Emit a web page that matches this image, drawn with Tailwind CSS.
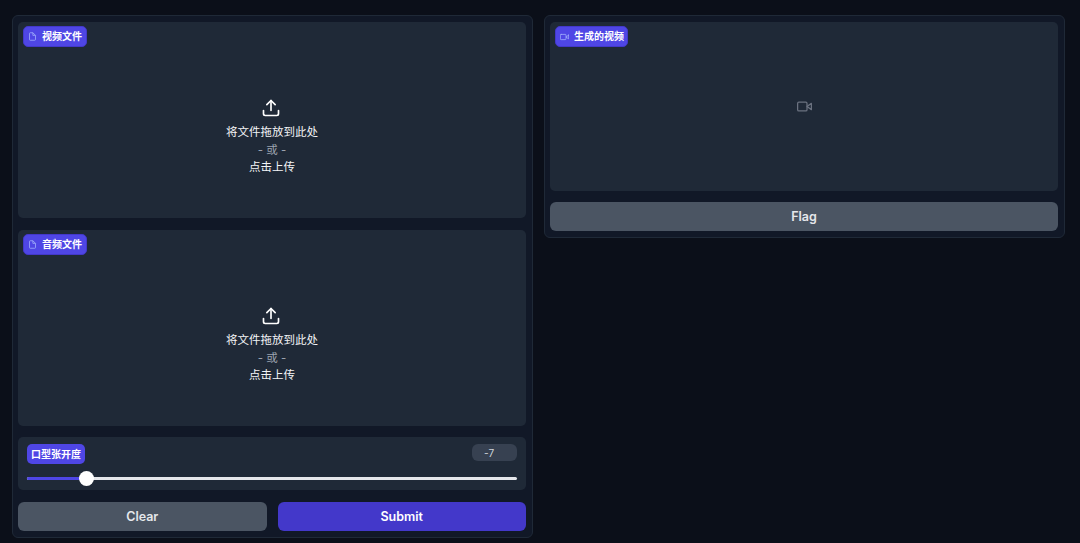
<!DOCTYPE html>
<html lang="zh">
<head>
  <meta charset="UTF-8">
  <title>Demo</title>
  <script src="https://cdn.jsdelivr.net/npm/@tailwindcss/browser@4"></script>
</head>
<body class="bg-[#0b0f19] h-[543px] overflow-hidden font-['Inter','Noto_Sans_CJK_SC',sans-serif] text-[#f3f4f6]">
  <div class="flex items-start gap-[11px] pl-3 pt-[15px]">

    <!-- left column -->
    <div class="w-[521px] h-[523px] flex flex-col bg-[#111827] border border-[#1f2937] rounded-md pl-[5px] pr-[6px] pt-[6px]">
      <div class="relative h-[196px] bg-[#1f2937] rounded-[5px] flex flex-col items-center pt-[76px]">
        <div class="absolute left-[5px] top-[4px] h-[21px] flex items-center gap-[5px] pl-[4px] pr-[4px] bg-[#4f46e5] border border-[#4338ca] rounded-[5px] text-[10px] font-semibold text-white">
          <svg class="w-[9px] h-[11px] text-[#a5b4fc]" viewBox="0 0 24 24" fill="none" stroke="currentColor" stroke-width="2"><path d="M13 2H6a2 2 0 0 0-2 2v16a2 2 0 0 0 2 2h12a2 2 0 0 0 2-2V9z"/><path d="M13 2v7h7"/></svg>
          视频文件
        </div>
        <svg class="w-[20px] h-[20px] text-white -translate-x-px" viewBox="0 0 24 24" fill="none" stroke="currentColor" stroke-width="2" stroke-linecap="round" stroke-linejoin="round"><path d="M21 15v4a2 2 0 0 1-2 2H5a2 2 0 0 1-2-2v-4"/><path d="M17 8l-5-5-5 5"/><path d="M12 3v12"/></svg>
        <div class="mt-[6px] text-[11.5px] leading-[17.5px] text-center">
          <div>将文件拖放到此处</div>
          <div class="text-[#9ca3af]">- 或 -</div>
          <div>点击上传</div>
        </div>
      </div>

      <div class="relative h-[196px] mt-[12px] bg-[#1f2937] rounded-[5px] flex flex-col items-center pt-[76px]">
        <div class="absolute left-[5px] top-[4px] h-[21px] flex items-center gap-[5px] pl-[4px] pr-[4px] bg-[#4f46e5] border border-[#4338ca] rounded-[5px] text-[10px] font-semibold text-white">
          <svg class="w-[9px] h-[11px] text-[#a5b4fc]" viewBox="0 0 24 24" fill="none" stroke="currentColor" stroke-width="2"><path d="M13 2H6a2 2 0 0 0-2 2v16a2 2 0 0 0 2 2h12a2 2 0 0 0 2-2V9z"/><path d="M13 2v7h7"/></svg>
          音频文件
        </div>
        <svg class="w-[20px] h-[20px] text-white -translate-x-px" viewBox="0 0 24 24" fill="none" stroke="currentColor" stroke-width="2" stroke-linecap="round" stroke-linejoin="round"><path d="M21 15v4a2 2 0 0 1-2 2H5a2 2 0 0 1-2-2v-4"/><path d="M17 8l-5-5-5 5"/><path d="M12 3v12"/></svg>
        <div class="mt-[6px] text-[11.5px] leading-[17.5px] text-center">
          <div>将文件拖放到此处</div>
          <div class="text-[#9ca3af]">- 或 -</div>
          <div>点击上传</div>
        </div>
      </div>

      <!-- slider -->
      <div class="h-[53px] mt-[11px] bg-[#1f2937] rounded-[5px] px-[9px] pt-[7px]">
        <div class="flex items-start justify-between">
          <div class="h-[20px] flex items-center px-[4px] bg-[#4f46e5] rounded-[5px] text-[10px] font-semibold text-white">口型张开度</div>
          <div class="w-[45px] h-[17px] bg-[#374151] rounded-md text-[10px] leading-[18px] text-[#d1d5db] pl-[12px]">-7</div>
        </div>
        <div class="relative h-[3px] mt-[13px] bg-[#e5e7eb] rounded-full">
          <div class="h-full w-[59px] bg-[#4f46e5] rounded-l-full"></div>
          <div class="absolute left-[52px] top-[-6px] w-[15px] h-[15px] bg-white rounded-full"></div>
        </div>
      </div>

      <div class="flex gap-[11px] mt-[12px]">
        <button class="flex-1 h-[29px] pt-px bg-[#4b5563] rounded-md text-[12.5px] font-semibold text-[#e5e7eb]">Clear</button>
        <button class="flex-1 h-[29px] pt-px bg-[#4338ca] rounded-md text-[12.5px] font-semibold text-white">Submit</button>
      </div>
    </div>

    <!-- right column -->
    <div class="w-[521px] h-[223px] flex flex-col bg-[#111827] border border-[#1f2937] rounded-md pl-[5px] pr-[6px] pt-[6px]">
      <div class="relative h-[169px] bg-[#1f2937] rounded-[5px] flex items-center justify-center">
        <div class="absolute left-[5px] top-[4px] h-[21px] flex items-center gap-[5px] pl-[4px] pr-[3px] bg-[#4f46e5] border border-[#4338ca] rounded-[5px] text-[10px] font-semibold text-white">
          <svg class="w-[9px] h-[10px] text-[#a5b4fc]" viewBox="0 0 24 24" fill="none" stroke="currentColor" stroke-width="2" stroke-linecap="round" stroke-linejoin="round"><path d="M23 7l-7 5 7 5V7z"/><rect x="1" y="5" width="15" height="14" rx="2"/></svg>
          生成的视频
        </div>
        <svg class="w-[15px] h-[15px] text-[#6b7280]" viewBox="0 0 24 24" fill="none" stroke="currentColor" stroke-width="2" stroke-linecap="round" stroke-linejoin="round"><path d="M23 7l-7 5 7 5V7z"/><rect x="1" y="5" width="15" height="14" rx="2"/></svg>
      </div>
      <button class="h-[29px] mt-[11px] pt-px bg-[#4b5563] rounded-md text-[12.5px] font-semibold text-[#e5e7eb]">Flag</button>
    </div>
  </div>
</body>
</html>
